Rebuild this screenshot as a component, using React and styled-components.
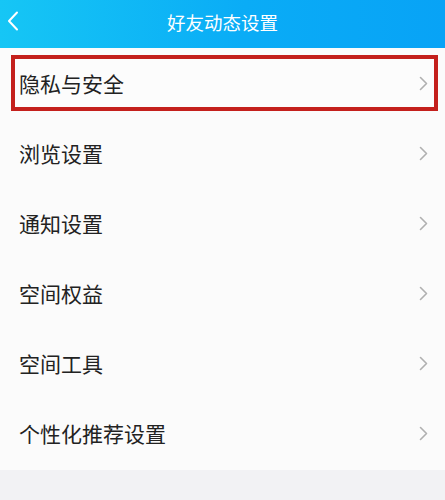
import React from "react";
import styled, { createGlobalStyle } from "styled-components";

const GlobalStyle = createGlobalStyle`
  html, body {
    margin: 0;
    padding: 0;
    background: #f2f2f4;
  }
  body {
    font-family: "Noto Sans CJK SC", "Noto Sans", sans-serif;
  }
`;

const items = [
  { label: "隐私与安全", highlighted: true },
  { label: "浏览设置" },
  { label: "通知设置" },
  { label: "空间权益" },
  { label: "空间工具" },
  { label: "个性化推荐设置" },
];

const App = () => {
  return (
    <>
      <GlobalStyle />
      <Page>
        <Header>
          <BackButton aria-label="返回">
            <svg width="12" height="20" viewBox="0 0 12 20" fill="none">
              <path d="M10 1.5 L2 10 L10 18.5" stroke="#fff" strokeWidth="2" strokeLinecap="round" strokeLinejoin="round" />
            </svg>
          </BackButton>
          <Title>好友动态设置</Title>
        </Header>
        <List>
          {items.map((item, i) => (
            <Row key={i}>
              <RowInner $highlighted={item.highlighted}>
                <Label>{item.label}</Label>
                <Chevron width="9" height="15" viewBox="0 0 9 15" fill="none">
                  <path d="M1.5 1.5 L7.5 7.5 L1.5 13.5" stroke="#b0b0b0" strokeWidth="1.6" strokeLinecap="round" strokeLinejoin="round" />
                </Chevron>
              </RowInner>
            </Row>
          ))}
        </List>
      </Page>
    </>
  );
};

export default App;

const Page = styled.div`
  width: 445px;
  min-height: 500px;
  background: #f2f2f4;
`;

const Header = styled.div`
  position: relative;
  height: 48px;
  display: flex;
  align-items: center;
  justify-content: center;
  background: linear-gradient(90deg, #16c6f5 0%, #0aacf6 55%, #08a3f6 100%);
`;

const BackButton = styled.div`
  position: absolute;
  left: 7px;
  top: 11px;
  display: flex;
`;

const Title = styled.h1`
  margin: 0 0 4px;
  color: #fff;
  font-size: 18.5px;
  font-weight: 400;
  letter-spacing: 0;
`;

const List = styled.div`
  background: #fbfbfb;
  height: 422px;
`;

const Row = styled.div`
  height: 70px;
  display: flex;
  align-items: center;
  padding: 0 7px 0 11px;
`;

const RowInner = styled.div`
  flex: 1;
  height: 56px;
  box-sizing: border-box;
  display: flex;
  align-items: center;
  justify-content: space-between;
  padding: 0 6px 0 4px;
  border: 4px solid ${(p) => (p.$highlighted ? "#c4201c" : "transparent")};
  background: ${(p) => (p.$highlighted ? "#fcfcfc" : "transparent")};
`;

const Label = styled.span`
  font-size: 21px;
  color: #222;
  line-height: 1;
`;

const Chevron = styled.svg`
  display: block;
`;
